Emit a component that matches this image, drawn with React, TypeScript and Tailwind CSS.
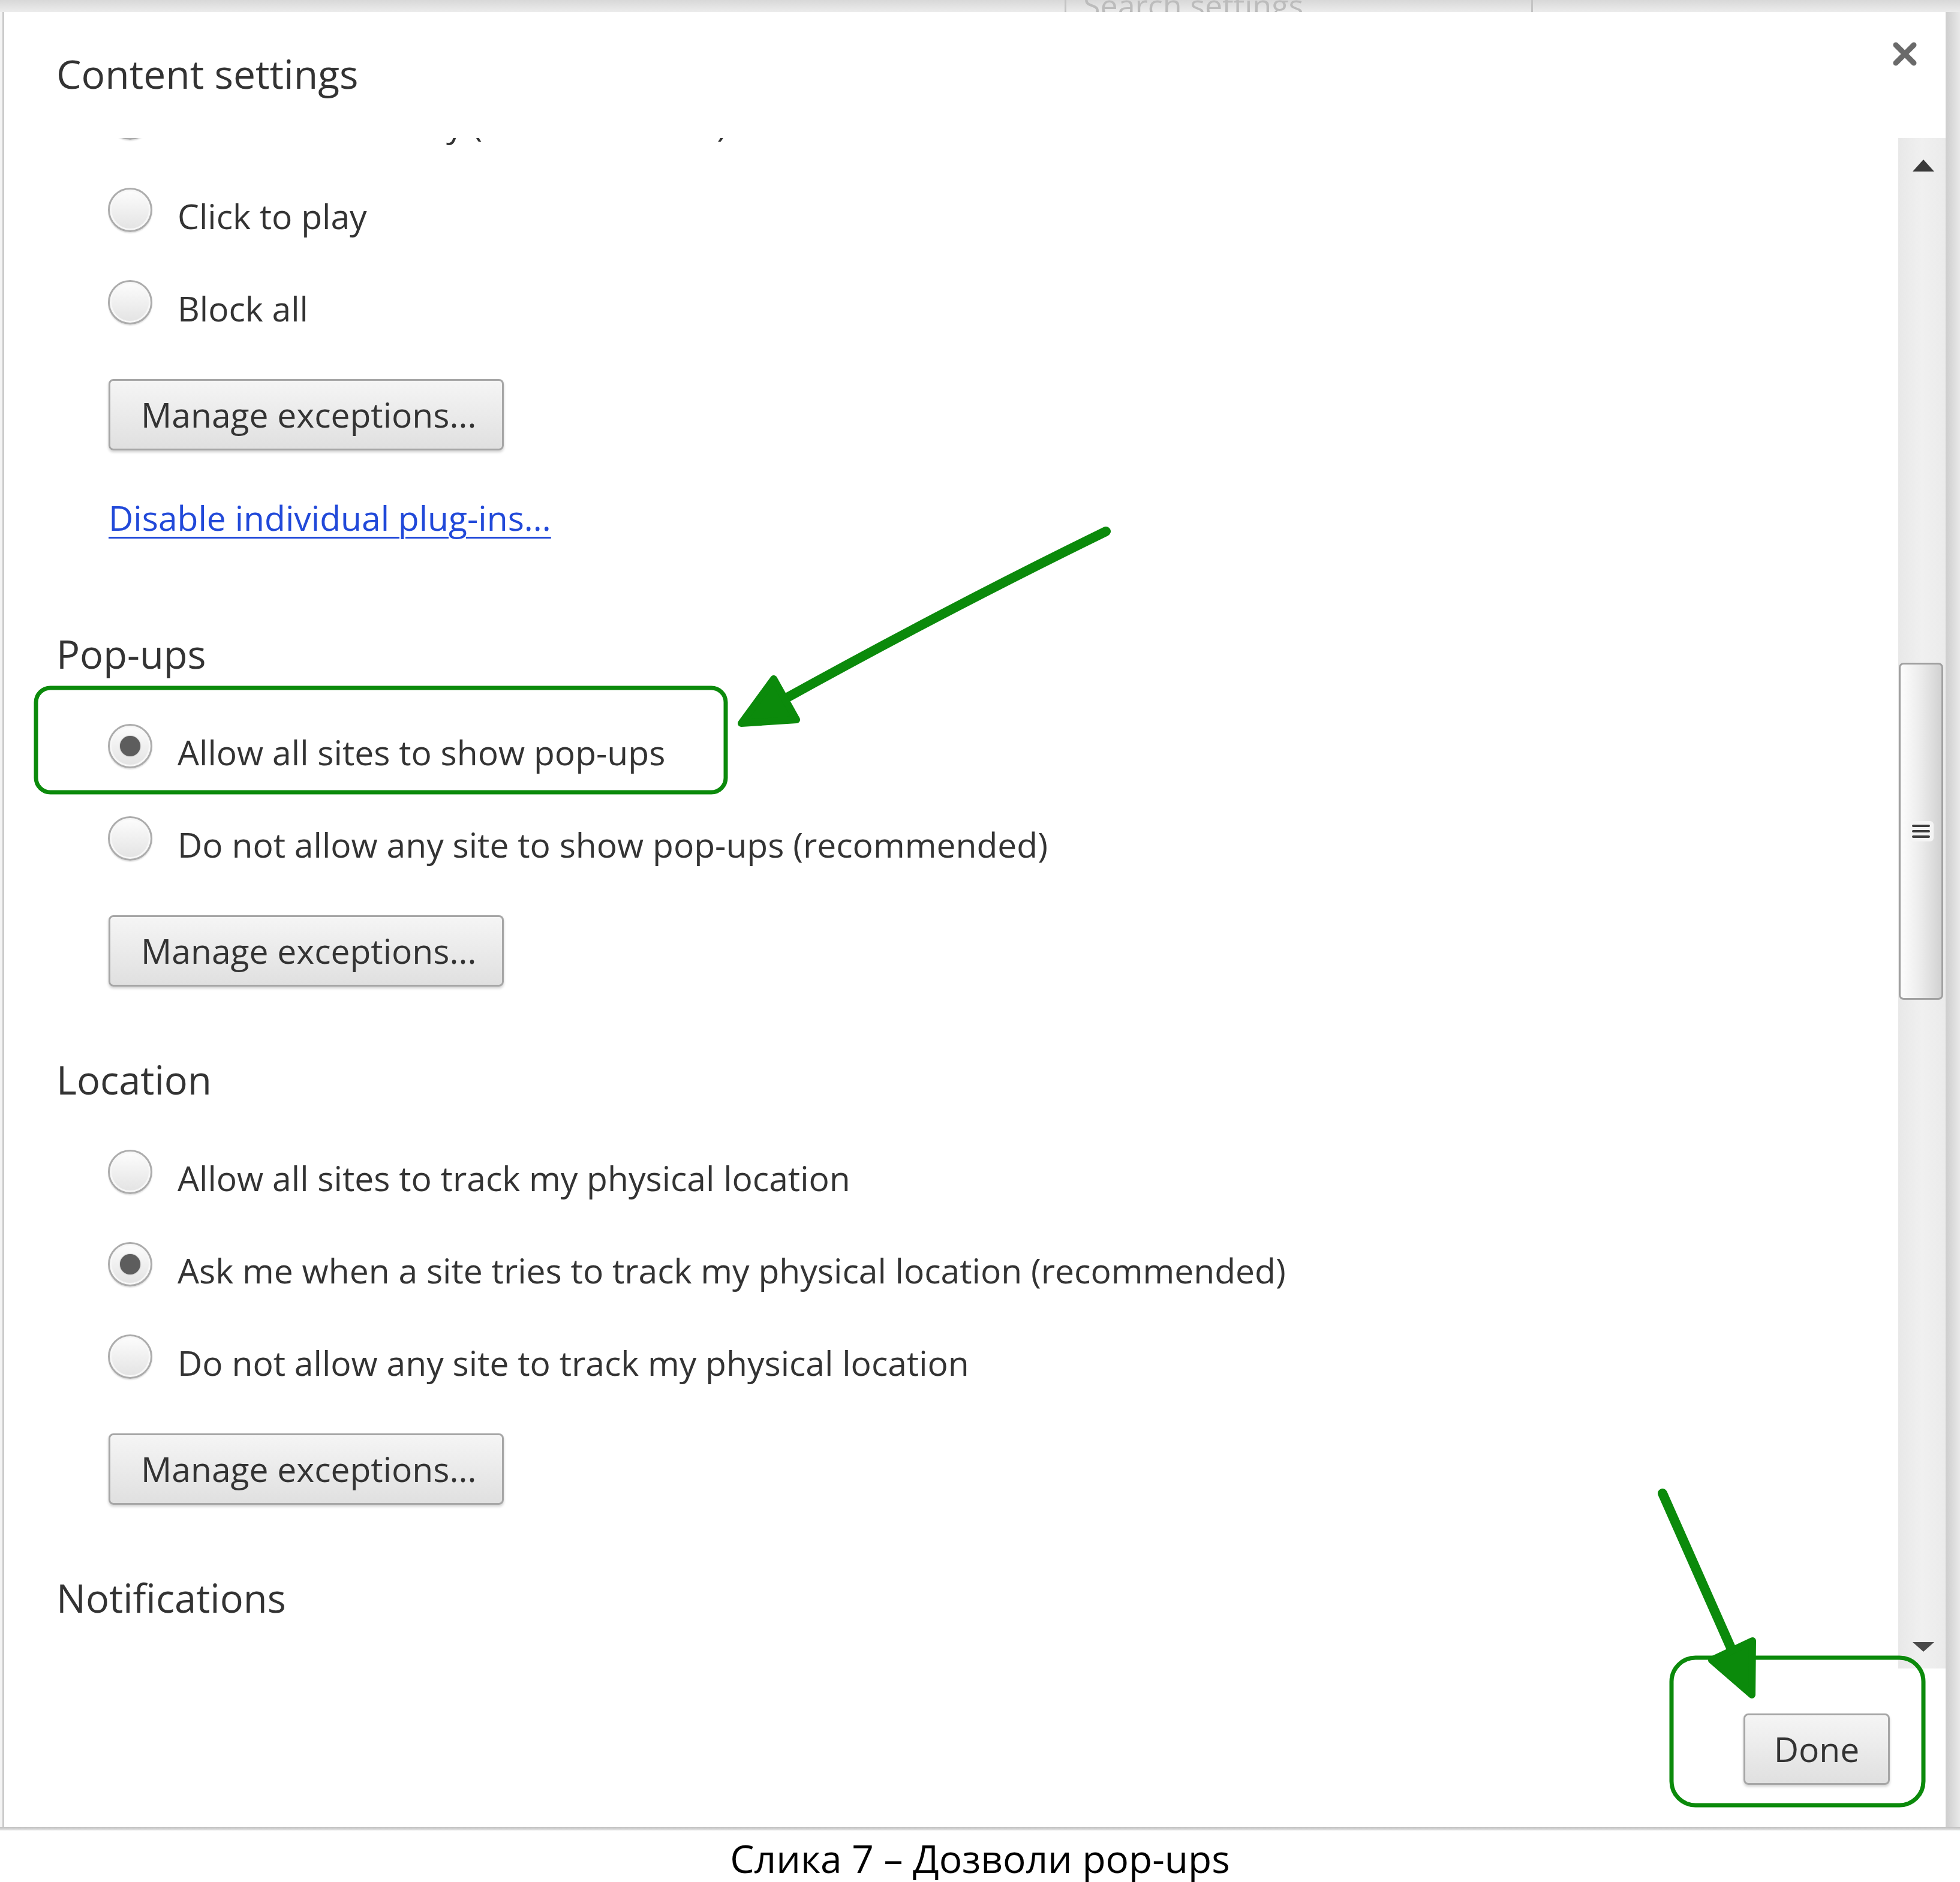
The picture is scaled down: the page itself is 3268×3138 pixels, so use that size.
import type { ReactNode } from 'react'

const text = 'text-[#333333]'

function Radio({ checked }: { checked?: boolean }) {
  return (
    <span className="flex h-[74px] w-[74px] shrink-0 items-center justify-center rounded-full border-[3px] border-[#acacac] bg-gradient-to-b from-[#fdfdfd] to-[#e3e3e3] shadow-[inset_0_0_0_3px_#f7f7f7,0_2px_2px_rgba(0,0,0,0.12)]">
      {checked && <span className="h-[34px] w-[34px] rounded-full bg-[#5d5d5d] shadow-[0_0_2px_rgba(0,0,0,0.4)]" />}
    </span>
  )
}

function Option({ label, checked }: { label: string; checked?: boolean }) {
  return (
    <div className="flex h-[154px] items-center gap-[42px] pl-[86px]">
      <Radio checked={checked} />
      <span className={`whitespace-nowrap pt-[22px] text-[57px] ${text}`}>{label}</span>
    </div>
  )
}

function GrayButton({ children, className = '' }: { children: ReactNode; className?: string }) {
  return (
    <button
      className={`flex h-[119px] items-center rounded-[8px] border-[3px] border-[#a6a6a6] bg-gradient-to-b from-[#f5f5f5] to-[#e0e0e0] text-[57px] shadow-[0_3px_4px_rgba(0,0,0,0.18)] ${text} ${className}`}
    >
      {children}
    </button>
  )
}

function Heading({ children, className = '' }: { children: ReactNode; className?: string }) {
  return <h3 className={`flex h-[156px] items-center pt-[4px] text-[65px] ${text} ${className}`}>{children}</h3>
}

function Manage({ className = '' }: { className?: string }) {
  return (
    <div className={`pl-[87px] ${className}`}>
      <GrayButton className="w-[659px] pl-[51px]">Manage exceptions...</GrayButton>
    </div>
  )
}

function Scrollbar() {
  return (
    <div className="flex w-[79px] shrink-0 flex-col bg-gradient-to-r from-[#e8e8e8] via-[#f0f0f0] to-[#ebebeb]">
      <div className="flex h-[91px] items-center justify-center pl-[4px]">
        <svg width="38" height="22" viewBox="0 0 38 22">
          <polygon points="19,1 37,21 1,21" fill="#3a3a3a" />
        </svg>
      </div>
      <div className="flex-1">
        <div className="ml-[1px] mt-[784px] flex h-[562px] w-[74px] items-center justify-center rounded-[8px] border-[3px] border-[#a0a0a0] bg-gradient-to-r from-[#fdfdfd] via-[#ebebeb] to-[#d2d2d2]">
          <div className="flex flex-col gap-[5px] rounded-[6px] bg-[#f4f4f4] px-[6px] py-[6px]">
            <span className="h-[4px] w-[30px] rounded-full bg-[#3c3c3c]" />
            <span className="h-[4px] w-[30px] rounded-full bg-[#3c3c3c]" />
            <span className="h-[4px] w-[30px] rounded-full bg-[#3c3c3c]" />
          </div>
        </div>
      </div>
      <div className="flex h-[72px] items-center justify-center pl-[4px]">
        <svg width="38" height="18" viewBox="0 0 38 18">
          <polygon points="1,1 37,1 19,17" fill="#4a4a4a" />
        </svg>
      </div>
    </div>
  )
}

export default function App() {
  return (
    <div className="relative h-[3138px] w-[3268px] overflow-hidden bg-white [font-family:'Open_Sans',sans-serif]">
      <div className="flex h-[3052px] flex-col">
        {/* page behind the overlay */}
        <div className="relative h-[20px] shrink-0 overflow-hidden bg-gradient-to-b from-[#d8d8d8] to-[#ececec]">
          <div className="flex h-full items-end pl-[1775px]">
            <span className="h-full w-[3px] bg-[#c4c4c4]" />
            <span className="-mb-[18px] ml-[28px] text-[52px] leading-[60px] text-[#bcbcbc]">Search settings</span>
            <span className="ml-[380px] h-full w-[3px] bg-[#c4c4c4]" />
          </div>
        </div>

        <div className="flex min-h-0 flex-1">
          <div className="w-[4px] shrink-0 bg-[#f4f4f4]" />
          <div className="flex min-w-0 flex-1 flex-col overflow-hidden rounded-tr-[20px] border-l-[3px] border-[#cacaca] bg-white">
            <div className="relative h-[210px] shrink-0">
              <h1 className={`pl-[87px] pt-[62px] text-[66px] leading-[80px] ${text}`}>Content settings</h1>
              <button className="absolute right-[46px] top-[48px] flex h-[44px] w-[44px] items-center justify-center">
                <svg width="40" height="40" viewBox="0 0 40 40">
                  <path d="M5 5 L35 35 M35 5 L5 35" stroke="#6a6a6a" strokeWidth="9" strokeLinecap="round" />
                </svg>
              </button>
            </div>

            <div className="flex h-[2552px] shrink-0">
              <div className="min-w-0 flex-1 overflow-hidden pl-[87px]">
                <div className="-mt-[111px]">
                  <Option label="Run automatically (recommended)" checked />
                  <Option label="Click to play" />
                  <Option label="Block all" />
                  <Manage className="mt-[51px]" />
                  <div className="mt-[73px] flex h-[80px] items-center pl-[87px]">
                    <a className="text-[57px] text-[#2149d9] underline decoration-[3px] underline-offset-[10px]">
                      Disable individual plug-ins...
                    </a>
                  </div>

                  <Heading className="mt-[107px]">Pop-ups</Heading>
                  <Option label="Allow all sites to show pop-ups" checked />
                  <Option label="Do not allow any site to show pop-ups (recommended)" />
                  <Manage className="mt-[51px]" />

                  <Heading className="mt-[76px]">Location</Heading>
                  <Option label="Allow all sites to track my physical location" />
                  <Option label="Ask me when a site tries to track my physical location (recommended)" checked />
                  <Option label="Do not allow any site to track my physical location" />
                  <Manage className="mt-[51px]" />

                  <Heading className="mt-[76px]">Notifications</Heading>
                </div>
              </div>
              <Scrollbar />
            </div>

            <div className="flex flex-1 items-start justify-end pr-[93px] pt-[75px]">
              <GrayButton className="w-[244px] justify-center">Done</GrayButton>
            </div>
          </div>
          <div className="w-[24px] shrink-0 bg-gradient-to-r from-[#cdcdcd] to-[#e9e9e9]" />
        </div>

        <div className="h-[6px] shrink-0 bg-gradient-to-b from-[#bdbdbd] to-[#e6e6e6]" />
      </div>

      <div className="flex h-[86px] items-center justify-center pt-[8px] text-[64px] text-black">
        Слика 7 – Дозволи pop-ups
      </div>

      {/* hand-drawn green annotations over the screenshot */}
      <svg className="pointer-events-none absolute inset-0" width="3268" height="3138" viewBox="0 0 3268 3138">
        <g stroke="#0b8a0b" fill="none" strokeWidth="7">
          <rect x="60" y="1147" width="1150" height="174" rx="24" />
          <rect x="2787" y="2764" width="420" height="246" rx="40" />
        </g>
        <g stroke="#0b8a0b" strokeWidth="16" strokeLinecap="round" strokeLinejoin="round" fill="#0b8a0b">
          <path d="M1844 886 Q1580 1015 1300 1170" fill="none" />
          <polygon points="1236,1206 1290,1132 1328,1200" strokeWidth="12" />
          <path d="M2772 2490 L2888 2752" fill="none" />
          <polygon points="2921,2826 2854,2768 2922,2736" strokeWidth="12" />
        </g>
      </svg>
    </div>
  )
}
